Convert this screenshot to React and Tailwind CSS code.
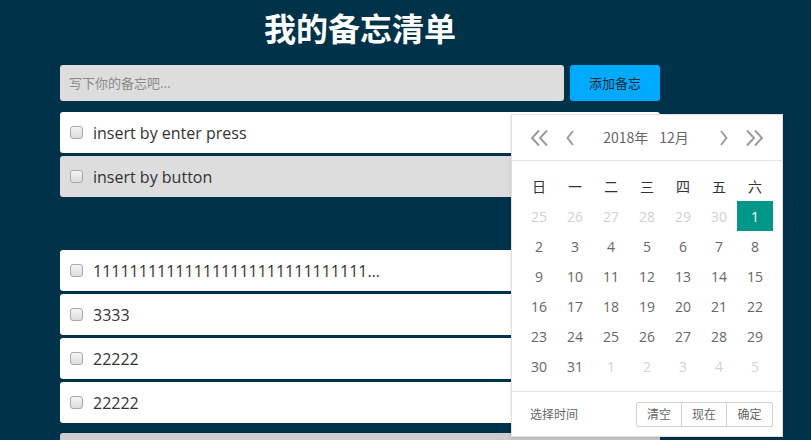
import React from "react";

const Check = () => (
  <div className="w-[13px] h-[13px] rounded-[3px] border border-[#a8a8a8] bg-gradient-to-b from-[#f4f4f4] to-[#dcdcdc] shrink-0" />
);

const Row = ({ text, gray, className = "" }) => (
  <div
    className={`h-[41px] w-[600px] rounded-[3px] flex items-center pl-[10px] ${gray ? "bg-[#dddddd]" : "bg-white"} ${className}`}
  >
    <Check />
    <span className="ml-[10px] text-[16px] text-[#333] leading-none">{text}</span>
  </div>
);

const ChevL = ({ double }) => (
  <svg width={double ? 20 : 10} height="18" viewBox={double ? "0 0 20 18" : "0 0 10 18"} fill="none" stroke="#999" strokeWidth="1.9">
    {double ? (
      <>
        <path d="M9 1.5 L2 9 L9 16.5" />
        <path d="M17 1.5 L10 9 L17 16.5" />
      </>
    ) : (
      <path d="M7 2 L1.5 9 L7 16" />
    )}
  </svg>
);
const ChevR = ({ double }) => (
  <svg width={double ? 20 : 10} height="18" viewBox={double ? "0 0 20 18" : "0 0 10 18"} fill="none" stroke="#999" strokeWidth="1.9">
    {double ? (
      <>
        <path d="M3 1.5 L10 9 L3 16.5" />
        <path d="M11 1.5 L18 9 L11 16.5" />
      </>
    ) : (
      <path d="M3 2 L8.5 9 L3 16" />
    )}
  </svg>
);

const weeks = [
  [[25, 0], [26, 0], [27, 0], [28, 0], [29, 0], [30, 0], [1, 2]],
  [[2, 1], [3, 1], [4, 1], [5, 1], [6, 1], [7, 1], [8, 1]],
  [[9, 1], [10, 1], [11, 1], [12, 1], [13, 1], [14, 1], [15, 1]],
  [[16, 1], [17, 1], [18, 1], [19, 1], [20, 1], [21, 1], [22, 1]],
  [[23, 1], [24, 1], [25, 1], [26, 1], [27, 1], [28, 1], [29, 1]],
  [[30, 1], [31, 1], [1, 0], [2, 0], [3, 0], [4, 0], [5, 0]],
];

export default function App() {
  return (
    <div
      className="relative w-[811px] h-[440px] overflow-hidden bg-[#00324a]"
      style={{ fontFamily: '"Open Sans", "Noto Sans CJK SC", sans-serif' }}
    >
      <div className="ml-[60px] w-[600px] flex flex-col">
        <h1
          className="h-[54px] pt-[6px] text-center text-white font-bold text-[32px] leading-[42px]"
          style={{ fontFamily: '"Noto Sans CJK SC", sans-serif' }}
        >
          我的备忘清单
        </h1>
        <div className="mt-[11px] flex gap-[6px]">
          <div
            className="w-[504px] h-[36px] rounded-[3px] bg-[#dddddd] flex items-center pl-[9px] text-[13px] text-[#8a8a8a]"
            style={{ fontFamily: '"Noto Sans CJK SC", sans-serif' }}
          >
            写下你的备忘吧...
          </div>
          <div
            className="w-[90px] h-[36px] rounded-[3px] bg-[#00aaff] flex items-center justify-center text-[13px] text-[#1d2a33]"
            style={{ fontFamily: '"Noto Sans CJK SC", sans-serif' }}
          >
            添加备忘
          </div>
        </div>
        <div className="mt-[11px] flex flex-col gap-[3px]">
          <Row text="insert by enter press" />
          <Row text="insert by button" gray />
        </div>
        <div className="mt-[53px] flex flex-col gap-[3px]">
          <Row text="111111111111111111111111111111…" />
          <Row text="3333" />
          <Row text="22222" />
          <Row text="22222" />
        </div>
        <div className="mt-[10px] h-[41px] rounded-[3px] bg-[#cdcdcd]" />
      </div>

      {/* Date picker popup */}
      <div
        className="absolute left-[511px] top-[114px] w-[272px] h-[323px] bg-white border border-[#e0e0e0] shadow-[0_2px_4px_rgba(0,0,0,0.12)] flex flex-col"
        style={{ fontFamily: '"Open Sans", "Noto Sans CJK SC", sans-serif' }}
      >
        <div className="h-[46px] border-b border-[#e2e2e2] flex items-center px-[18px]">
          <ChevL double />
          <div className="ml-[16px]"><ChevL /></div>
          <div className="flex-1 flex justify-center text-[14px] text-[#666] gap-[11px] pr-[2px]" style={{ fontFamily: '"Noto Sans CJK SC", sans-serif' }}>
            <span>2018年</span>
            <span>12月</span>
          </div>
          <div className="mr-[16px]"><ChevR /></div>
          <ChevR double />
        </div>
        <div className="px-[9px] pt-[10px] pb-[10px]">
          <div className="grid grid-cols-7 h-[30px] items-center text-center text-[14px] text-[#333]" style={{ fontFamily: '"Noto Sans CJK SC", sans-serif' }}>
            {["日", "一", "二", "三", "四", "五", "六"].map((d) => (
              <span key={d}>{d}</span>
            ))}
          </div>
          {weeks.map((w, i) => (
            <div key={i} className="grid grid-cols-7">
              {w.map(([n, t], j) => (
                <div
                  key={j}
                  className={`h-[30px] flex items-center justify-center text-[14px] ${
                    t === 2 ? "bg-[#009688] text-white" : t === 1 ? "text-[#666]" : "text-[#d2d2d2]"
                  }`}
                >
                  {n}
                </div>
              ))}
            </div>
          ))}
        </div>
        <div className="flex-1 border-t border-[#e2e2e2] flex items-center px-[9px] text-[12px]" style={{ fontFamily: '"Noto Sans CJK SC", sans-serif' }}>
          <span className="ml-[9px] text-[#666]">选择时间</span>
          <div className="ml-auto flex">
            {["清空", "现在", "确定"].map((b, i) => (
              <div
                key={b}
                className={`h-[25px] flex items-center justify-center border border-[#d2d2d2] text-[#666] ${i > 0 ? "-ml-px w-[46px]" : "w-[46px] rounded-l-[2px]"} ${i === 2 ? "rounded-r-[2px] w-[47px]" : ""}`}
              >
                {b}
              </div>
            ))}
          </div>
        </div>
      </div>
    </div>
  );
}
